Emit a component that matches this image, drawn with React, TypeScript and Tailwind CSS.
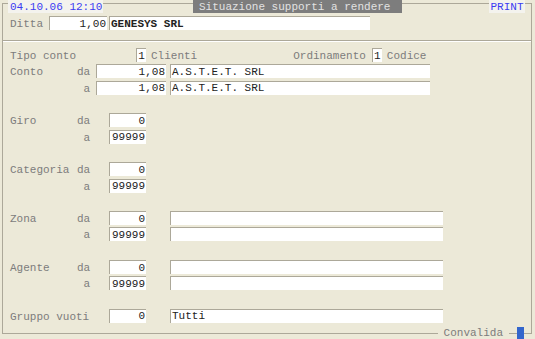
const rowH = "h-[16.3px]";

function Field({
  w,
  value = "",
  align = "right",
  bold = false,
}: {
  w: string;
  value?: string;
  align?: "left" | "right";
  bold?: boolean;
}) {
  return (
    <div
      className={`${w} flex h-[14px] shrink-0 items-center border-l border-t border-[#aca899] bg-white px-[1px] pt-[1px] leading-none text-[#222] ${
        align === "right" ? "justify-end" : "justify-start"
      } ${bold ? "font-bold" : ""}`}
    >
      <span className="whitespace-pre">{value}</span>
    </div>
  );
}

function Label({ text, suffix }: { text: string; suffix?: string }) {
  return (
    <>
      <span className="w-[67px] shrink-0 whitespace-pre pt-[3px] text-[#7c7c7c]">{text}</span>
      <span className="w-[13px] shrink-0 pt-[3px] text-right text-[#7c7c7c]">{suffix}</span>
    </>
  );
}

function RangeRows({ name, withText }: { name: string; withText?: boolean }) {
  return (
    <>
      <div className={`flex ${rowH} items-center`}>
        <Label text={name} suffix="da" />
        <div className="ml-[19px]">
          <Field w="w-[37px]" value="0" />
        </div>
        {withText ? (
          <div className="ml-[24px]">
            <Field w="w-[273px]" />
          </div>
        ) : null}
      </div>
      <div className={`flex ${rowH} items-center`}>
        <Label text="" suffix="a" />
        <div className="ml-[19px]">
          <Field w="w-[37px]" value="99999" />
        </div>
        {withText ? (
          <div className="ml-[24px]">
            <Field w="w-[273px]" />
          </div>
        ) : null}
      </div>
      <div className={rowH} />
    </>
  );
}

export default function App() {
  return (
    <div className="h-[339px] w-[535px] overflow-hidden bg-[#ece9d8] font-['Liberation_Mono',monospace] text-[11px] leading-none">
      <div className="ml-[2px] mr-[3px] mt-[3px] flex h-[331px] flex-col border border-[#aca899]">
        {/* header over top line */}
        <div className="-mt-[4px] flex h-[13px] items-stretch whitespace-nowrap">
          <div className="ml-[5px] flex w-[95px] items-center bg-[#f4f3ee] pl-[2px] pt-[1px] text-[#3b3bf2]">
            04.10.06 12:10
          </div>
          <div className="ml-[90px] flex w-[209px] items-center bg-[#7d7d7d] pl-[6px] pt-[1px] text-[#e2e2e2]">
            Situazione supporti a rendere
          </div>
          <div className="ml-auto mr-[6px] flex w-[36px] items-center justify-center bg-[#f4f3ee] pt-[1px] text-[#3b3bf2]">
            PRINT
          </div>
        </div>

        {/* Ditta */}
        <div className="mt-[3px] flex h-[14px] items-center">
          <span className="ml-[7px] w-[39px] pt-[3px] text-[#7c7c7c]">Ditta</span>
          <Field w="w-[58px]" value="1,00" />
          <div className="ml-[2px]">
            <Field w="w-[261px]" value="GENESYS SRL" align="left" bold />
          </div>
        </div>

        <div className="mt-[10px] h-[2px] border-b border-t border-b-white border-t-[#aca899]" />

        <div className="ml-[7px] mt-[5px] flex flex-col">
          <div className={`flex ${rowH} items-center`}>
            <Label text="Tipo conto" />
            <div className="ml-[46px] flex h-[14px] w-[10px] items-center justify-center border-l border-t border-[#aca899] bg-white pt-[1px] text-[#222]">
              1
            </div>
            <span className="ml-[5px] pt-[3px] text-[#7c7c7c]">Clienti</span>
            <span className="ml-[96px] pt-[3px] text-[#7c7c7c]">Ordinamento</span>
            <div className="ml-[6px] flex h-[14px] w-[10px] items-center justify-center border-l border-t border-[#aca899] bg-white pt-[1px] text-[#222]">
              1
            </div>
            <span className="ml-[5px] pt-[3px] text-[#7c7c7c]">Codice</span>
          </div>
          <div className={`flex ${rowH} items-center`}>
            <Label text="Conto" suffix="da" />
            <div className="ml-[6px]">
              <Field w="w-[70px]" value="1,08" />
            </div>
            <div className="ml-[4px]">
              <Field w="w-[260px]" value="A.S.T.E.T. SRL" align="left" />
            </div>
          </div>
          <div className={`flex ${rowH} items-center`}>
            <Label text="" suffix="a" />
            <div className="ml-[6px]">
              <Field w="w-[70px]" value="1,08" />
            </div>
            <div className="ml-[4px]">
              <Field w="w-[260px]" value="A.S.T.E.T. SRL" align="left" />
            </div>
          </div>
          <div className={rowH} />

          <RangeRows name="Giro" />
          <RangeRows name="Categoria" />
          <RangeRows name="Zona" withText />
          <RangeRows name="Agente" withText />

          <div className={`flex ${rowH} items-center`}>
            <Label text="Gruppo vuoti" />
            <div className="ml-[19px]">
              <Field w="w-[37px]" value="0" />
            </div>
            <div className="ml-[24px]">
              <Field w="w-[273px]" value="Tutti" align="left" />
            </div>
          </div>
        </div>

        {/* footer over bottom line */}
        <div className="-mb-[6px] mt-auto flex h-[13px] items-center justify-end">
          <span className="bg-[#ece9d8] px-[6px] pt-[1px] text-[#7c7c7c]">Convalida</span>
          <div className="ml-[8px] h-[12px] w-[7px] bg-[#3366cc]" />
          <div className="w-[7px]" />
        </div>
      </div>
    </div>
  );
}
